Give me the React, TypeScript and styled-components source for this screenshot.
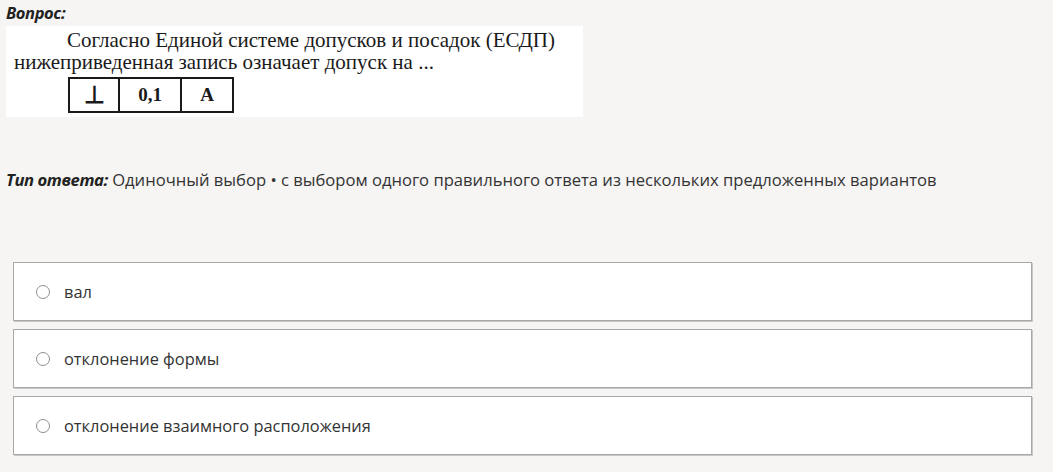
import React from "react";
import styled, { createGlobalStyle } from "styled-components";

const GlobalStyle = createGlobalStyle`
  html, body {
    margin: 0;
    padding: 0;
    background: #f6f5f3;
  }
  body {
    font-family: "Open Sans", "Noto Sans", sans-serif;
    color: #333;
  }
`;

const options = ["вал", "отклонение формы", "отклонение взаимного расположения"];

const App = () => {
  return (
    <Page>
      <GlobalStyle />
      <Label>Вопрос:</Label>
      <QuestionImage>
        <SerifLine indent={61}>Согласно Единой системе допусков и посадок (ЕСДП)</SerifLine>
        <SerifLine indent={8}>нижеприведенная запись означает допуск на ...</SerifLine>
        <FrameTable>
          <FrameCell width={48} large>⊥</FrameCell>
          <FrameCell width={60} bold>0,1</FrameCell>
          <FrameCell width={50} bold>А</FrameCell>
        </FrameTable>
      </QuestionImage>
      <AnswerType>
        <Label as="span">Тип ответа:</Label> Одиночный выбор • с выбором одного правильного ответа из нескольких предложенных вариантов
      </AnswerType>
      <OptionList>
        {options.map((o) => (
          <Option key={o}>
            <Radio />
            <OptionText>{o}</OptionText>
          </Option>
        ))}
      </OptionList>
    </Page>
  );
};

export default App;

const Page = styled.div`
  padding: 1px 0 0 6px;
  width: 1053px;
  height: 472px;
  box-sizing: border-box;
  overflow: hidden;
`;

const Label = styled.div`
  font-weight: 700;
  font-style: italic;
  font-size: 16.5px;
  color: #222;
  line-height: 23px;
  letter-spacing: -0.4px;
`;

const QuestionImage = styled.div`
  margin-top: 2px;
  width: 577px;
  height: 91px;
  background: #fff;
  box-sizing: border-box;
  padding-top: 3px;
`;

const SerifLine = styled.div<{ indent: number }>`
  font-family: "Liberation Serif", "Times New Roman", serif;
  font-size: 21px;
  line-height: 22px;
  color: #1a1a1a;
  padding-left: ${(p) => p.indent}px;
  white-space: nowrap;
`;

const FrameTable = styled.div`
  display: flex;
  margin: 4px 0 0 62px;
  border: 2px solid #1a1a1a;
  width: fit-content;
  height: 36px;
  box-sizing: border-box;
`;

const FrameCell = styled.div<{ width: number; bold?: boolean; large?: boolean }>`
  width: ${(p) => p.width}px;
  display: flex;
  align-items: center;
  justify-content: center;
  font-family: "Liberation Serif", "Times New Roman", serif;
  font-size: ${(p) => (p.large ? 24 : 19)}px;
  font-weight: ${(p) => (p.bold || p.large ? 700 : 400)};
  color: #1a1a1a;
  & + & {
    border-left: 2px solid #1a1a1a;
  }
`;

const AnswerType = styled.div`
  margin-top: 51px;
  font-size: 16.6px;
  line-height: 24px;
  color: #333;

  & > span {
    display: inline;
    font-size: 16.6px;
    color: #222;
  }
`;

const OptionList = styled.div`
  margin: 70px 0 0 7px;
  width: 1019px;
  display: flex;
  flex-direction: column;
  gap: 8px;
`;

const Option = styled.div`
  height: 59px;
  box-sizing: border-box;
  background: #fff;
  border: 1px solid #a8a8a8;
  box-shadow: 1px 1px 0 #c8c8c8;
  display: flex;
  align-items: center;
  padding-left: 22px;
`;

const Radio = styled.span`
  flex-shrink: 0;
  display: block;
  width: 14px;
  height: 14px;
  box-sizing: border-box;
  border: 1.5px solid #8f8f8f;
  border-radius: 50%;
  background: #fff;
  margin-right: 14px;
`;

const OptionText = styled.span`
  font-size: 16.4px;
  color: #333;
`;
